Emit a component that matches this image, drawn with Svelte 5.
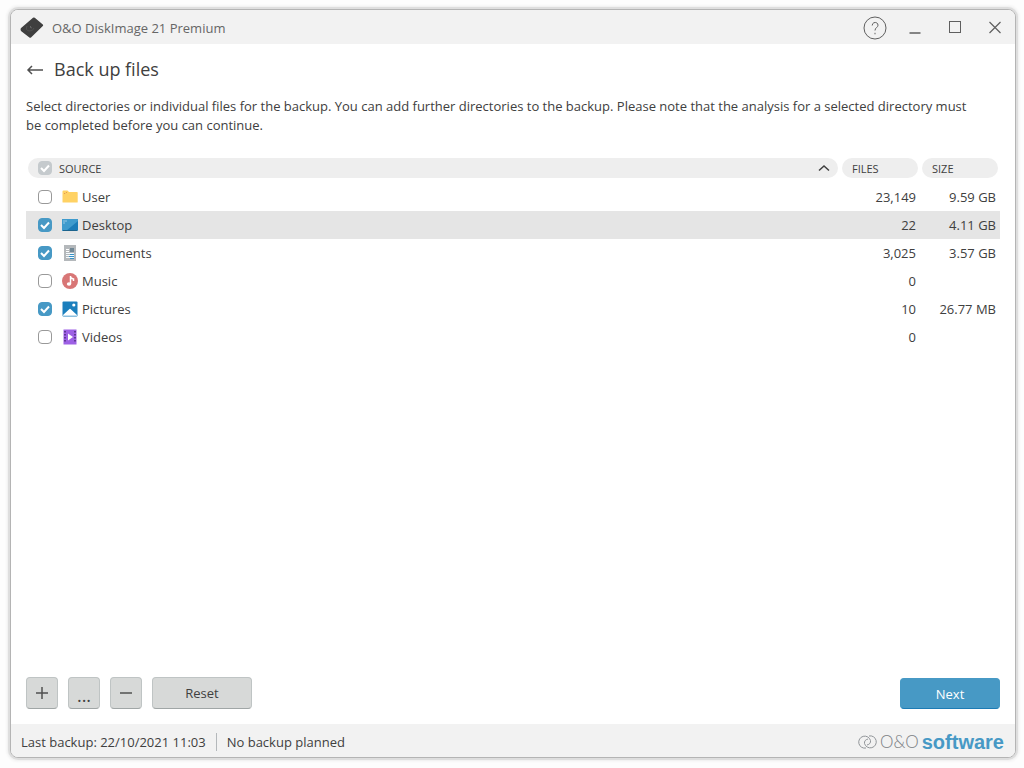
<script>
  let rows = $state([
    { name: "User", icon: "folder", files: "23,149", size: "9.59 GB", checked: false },
    { name: "Desktop", icon: "desktop", files: "22", size: "4.11 GB", checked: true },
    { name: "Documents", icon: "document", files: "3,025", size: "3.57 GB", checked: true },
    { name: "Music", icon: "music", files: "0", size: "", checked: false },
    { name: "Pictures", icon: "picture", files: "10", size: "26.77 MB", checked: true },
    { name: "Videos", icon: "video", files: "0", size: "", checked: false },
  ]);
  let selected = $state("Desktop");

  function reset() {
    rows.forEach((row) => (row.checked = false));
  }
</script>

{#snippet rowIcon(icon)}
  <svg class="icon" viewBox="0 0 16 16" aria-hidden="true">
    {#if icon === "folder"}
      <path d="M.5 2.500q0-1 1-1h4L7 3h8q.7 0 .7.7V13q0 .6-.6.6H1.100q-.6 0-.6-.6z" fill="#ffd264" />
      <path d="M2 4.500h1.200M4 3.500h1" stroke="#df8a4b" stroke-width=".8" />
    {:else if icon === "desktop"}
      <rect x="0" y="2" width="16" height="12" rx="1" fill="#1b7cb8" />
      <path d="M1 2h14q1 0 1 1v1L4 14H1q-1 0-1-1V3q0-1 1-1z" fill="#3e9bcd" />
      <path d="M1.500 4h1m1 0h1M1.500 6h1" stroke="#eef8ff" />
      <path d="M1 13.500h14" stroke="#1c638c" />
    {:else if icon === "document"}
      <rect x="2" y="0" width="12" height="16" fill="#b4b8bb" />
      <path d="M4 4.500h3m-3 2h3" stroke="#fff" />
      <rect x="8" y="3" width="4" height="4" fill="#718896" />
      <path d="M4 8.500h8m-8 2h8m-8 2h8" stroke="#f4fbff" />
      <path d="M8 9.500h4m-5 2h5m-4 2h4" stroke="#3791c5" />
    {:else if icon === "music"}
      <circle cx="8" cy="8" r="8" fill="#d87676" />
      <path d="M8.500 3v8M8.500 3.500q0 2 3 2.500v2" fill="none" stroke="#fff" stroke-width="1.500" />
      <ellipse cx="7" cy="11" rx="2.200" ry="1.800" fill="#fff" />
    {:else if icon === "picture"}
      <rect x=".5" y=".5" width="15" height="15" rx="1" fill="#1b7fbd" />
      <path d="M1 14.800V14l6.500-6q.5-.5 1 0l6.500 6v.8z" fill="#fff" />
      <circle cx="11.800" cy="4" r="1.600" fill="#fff" />
    {:else}
      <rect x="1.500" y=".5" width="13" height="15" fill="#9d60e5" />
      <path d="M3 2v12M13 2v12" stroke="#4b297b" stroke-width="1.500" stroke-dasharray="1.500 1.500" />
      <path d="M6 4.500v7l5-3.500z" fill="#fff" />
    {/if}
  </svg>
{/snippet}

<div class="desktop">
  <main class="window">
    <header class="titlebar">
      <svg class="app-logo" viewBox="0 0 24 22" aria-hidden="true">
        <path d="M.8 11.300L13 .8q.9-.7 1.800 0l8 6.800q.8.7 0 1.500L11 20.500q-.8.7-1.600 0L1 14q-.8-1-.2-2.700z" fill="#3f3f3f" />
        <path d="M7 9q-2 4 2 5 4 .5 5-3" fill="none" stroke="#555" stroke-width=".8" />
        <path d="M10 9.500l1.500 1.300" stroke="#999" stroke-width=".8" />
      </svg>
      <span class="app-title">O&amp;O DiskImage 21 Premium</span>
      <nav class="controls">
        <button aria-label="Help">
          <svg viewBox="0 0 24 24"><circle cx="12" cy="12" r="11" /><path d="M9.200 9.500c0-4 5.800-4 5.800-.3 0 2.300-3 2.400-3 5.300M12 16.800v1.500" /></svg>
        </button>
        <button aria-label="Minimize">
          <svg viewBox="0 0 24 24"><path d="M6.500 17h11" stroke-width="1.500" /></svg>
        </button>
        <button aria-label="Maximize">
          <svg viewBox="0 0 24 24"><rect x="6.500" y="5.500" width="11" height="11" /></svg>
        </button>
        <button aria-label="Close">
          <svg viewBox="0 0 24 24"><path d="M6.500 6l11 11m0-11l-11 11" stroke-width="1.200" /></svg>
        </button>
      </nav>
    </header>

    <section class="content">
      <div class="heading">
        <button class="back" aria-label="Back">
          <svg viewBox="0 0 18 14"><path d="M17 8H2M6 4L2 8l4 4" /></svg>
        </button>
        <h1>Back up files</h1>
      </div>

      <p class="intro">
        Select directories or individual files for the backup. You can add further directories to the backup. Please
        note that the analysis for a selected directory must be completed before you can continue.
      </p>

      <table>
        <thead>
          <tr>
            <th>
              <div class="pill source">
                <input type="checkbox" class="all" checked disabled aria-label="Select all" />
                <span>SOURCE</span>
                <svg class="sort" viewBox="0 0 12 8" aria-hidden="true"><path d="M1 6.500l5-4.500 5 4.500" /></svg>
              </div>
            </th>
            <th class="num"><div class="pill">FILES</div></th>
            <th class="num"><div class="pill">SIZE</div></th>
          </tr>
        </thead>
        <tbody>
          {#each rows as row}
            <tr class:selected={row.name === selected} onclick={() => (selected = row.name)}>
              <td>
                <label>
                  <input type="checkbox" bind:checked={row.checked} />
                  {@render rowIcon(row.icon)}
                  <span>{row.name}</span>
                </label>
              </td>
              <td class="right">{row.files}</td>
              <td class="right">{row.size}</td>
            </tr>
          {/each}
        </tbody>
      </table>

      <div class="actions">
        <button class="btn square" aria-label="Add">
          <svg viewBox="0 0 12 12"><path d="M0 6h12M6 0v12" /></svg>
        </button>
        <button class="btn square dots" aria-label="Browse">...</button>
        <button class="btn square" aria-label="Remove">
          <svg viewBox="0 0 12 12"><path d="M0 6h12" /></svg>
        </button>
        <button class="btn" onclick={reset}>Reset</button>
        <button class="btn next">Next</button>
      </div>
    </section>

    <footer class="statusbar">
      <span>Last backup: 22/10/2021 11:03</span>
      <span class="divider"></span>
      <span>No backup planned</span>
      <div class="brand">
        <svg viewBox="0 0 19 16" aria-hidden="true">
          <path d="M9 11Q13 10 12.500 6.500A6 6 0 1 0 8 14" />
          <path d="M10 5Q6 6 6.500 9.500A6 6 0 1 0 11 2" />
        </svg>
        <span class="oo">O&amp;O</span>
        <strong>software</strong>
      </div>
    </footer>
  </main>
</div>

<style>
  :global(body) {
    background: #fdfdfd;
    color: #404040;
    font-family: "Open Sans", "Noto Sans", sans-serif;
    font-size: 13px;
  }

  * {
    box-sizing: border-box;
  }

  button {
    font: inherit;
    color: inherit;
    padding: 0;
    border: none;
    background: none;
  }

  svg {
    display: block;
    flex: none;
  }

  .desktop {
    display: flex;
    min-height: 100vh;
    padding: 9px 8px 10px 10px;
  }

  .window {
    display: flex;
    flex: 1;
    flex-direction: column;
    background: #fff;
    border: 1px solid #b4b4b4;
    border-radius: 8px;
    box-shadow: 0 0 0 2px #dedede, 0 0 3px 3px #ededed;
    overflow: hidden;
  }

  .titlebar {
    display: flex;
    align-items: center;
    height: 34px;
    padding: 2px 8px 0 9px;
    background: #f2f2f2;
    color: #666;
  }

  .app-logo {
    width: 24px;
    height: 22px;
    margin-right: 8px;
  }

  .controls {
    display: flex;
    gap: 16px;
    margin-left: auto;
  }

  .controls svg {
    width: 24px;
    height: 24px;
    fill: none;
    stroke: #5f5f5f;
  }

  .content {
    display: flex;
    flex: 1;
    flex-direction: column;
    padding: 12px 15px 15px;
  }

  .heading {
    display: flex;
    align-items: center;
    gap: 10px;
  }

  .back svg {
    width: 18px;
    height: 14px;
    fill: none;
    stroke: #505050;
    stroke-width: 1.5;
  }

  h1 {
    margin: 0;
    font-size: 18px;
    line-height: 26px;
    font-weight: 400;
  }

  .intro {
    margin: 15px 0 23px;
    padding-right: 24px;
    line-height: 19px;
  }

  table {
    width: 100%;
    border-collapse: collapse;
  }

  th {
    padding: 0 2px 5px;
    font-size: 11px;
    font-weight: 400;
    text-align: left;
  }

  .num {
    width: 80px;
  }

  .pill {
    display: flex;
    align-items: center;
    height: 20px;
    padding: 0 10px;
    border-radius: 10px;
    background: #eee;
  }

  .source {
    gap: 7px;
    padding-right: 8px;
  }

  .sort {
    width: 12px;
    height: 8px;
    margin-left: auto;
    fill: none;
    stroke: #404040;
    stroke-width: 1.5;
  }

  td {
    height: 28px;
    padding: 0;
  }

  .right {
    padding-right: 4px;
    text-align: right;
  }

  .selected {
    background: #e5e5e5;
  }

  label {
    display: flex;
    align-items: center;
    padding-left: 12px;
  }

  .icon {
    width: 16px;
    height: 16px;
    margin: 0 4px 0 10px;
  }

  input {
    appearance: none;
    width: 14px;
    height: 14px;
    margin: 0;
    border: 1px solid #999;
    border-radius: 4px;
    background: #fff;
  }

  input:checked {
    border-color: #4799c5;
    background: #4799c5 url("data:image/svg+xml,%3Csvg xmlns='http://www.w3.org/2000/svg' viewBox='0 0 12 12'%3E%3Cpath d='M2 6l3 3 5-5.500' fill='none' stroke='white' stroke-width='2'/%3E%3C/svg%3E") center / 12px no-repeat;
  }

  .all:checked {
    border-color: #c5cacd;
    background-color: #c5cacd;
  }

  .actions {
    display: flex;
    align-items: flex-end;
    gap: 10px;
    margin-top: auto;
  }

  .btn {
    display: flex;
    align-items: center;
    justify-content: center;
    width: 100px;
    height: 32px;
    border: 1px solid #bfc4c4;
    border-bottom-color: #a0a6a6;
    border-radius: 4px;
    background: #d7d9d8;
  }

  .square {
    width: 32px;
  }

  .square svg {
    width: 12px;
    height: 12px;
    stroke: #505050;
    stroke-width: 1.5;
  }

  .dots {
    padding-top: 4px;
    font-size: 18px;
  }

  .next {
    height: 31px;
    margin-left: auto;
    border-color: #4799c5;
    border-bottom-color: #1c7bb5;
    background: #4799c5;
    color: #fff;
  }

  .statusbar {
    display: flex;
    align-items: center;
    height: 33px;
    padding: 2px 11px 0 10px;
    background: #f2f2f2;
  }

  .divider {
    width: 1px;
    height: 18px;
    margin: 0 10px;
    background: #b4b8bb;
  }

  .brand {
    display: flex;
    align-items: center;
    gap: 3px;
    margin-left: auto;
    font-family: "Liberation Sans", Arial, sans-serif;
    color: #7c8084;
  }

  .brand svg {
    width: 19px;
    height: 16px;
    fill: none;
    stroke: #909498;
  }

  .oo {
    font-family: Lato, sans-serif;
    font-size: 17px;
    font-weight: 300;
  }

  strong {
    font-size: 20px;
    line-height: 22px;
    color: #4799c5;
  }
</style>
